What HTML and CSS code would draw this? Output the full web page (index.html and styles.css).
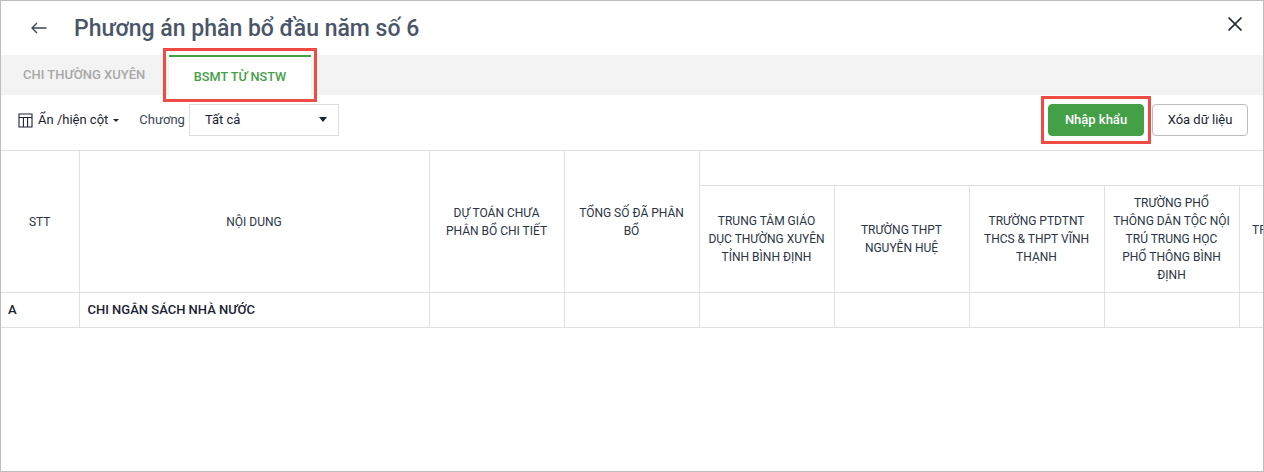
FILE: index.html
```html
<!DOCTYPE html>
<html lang="vi">
  <head>
    <meta charset="UTF-8" />
    <meta name="viewport" content="width=device-width, initial-scale=1.0" />
    <title>Phương án phân bổ đầu năm số 6</title>
    <link rel="stylesheet" href="styles.css">
  </head>
  <body>
    <div class="dialog">
      <!-- Header -->
      <div class="header">
        <svg class="back-icon" width="16" height="12" viewBox="0 0 16 12">
          <path d="M15.5 6H1M6 1 1 6l5 5" fill="none" stroke="#3d4654" stroke-width="1.4" />
        </svg>
        <h1>Phương án phân bổ đầu năm số 6</h1>
        <svg class="close-icon" width="16" height="16" viewBox="0 0 16 16">
          <path d="M1.5 1.5l13 13M14.5 1.5l-13 13" fill="none" stroke="#1a2233" stroke-width="1.7" />
        </svg>
      </div>

      <!-- Tabs -->
      <div class="tabs">
        <div class="tab">CHI THƯỜNG XUYÊN</div>
        <div class="tab active">BSMT TỪ NSTW</div>
      </div>

      <!-- Toolbar -->
      <div class="toolbar">
        <svg class="column-icon" width="15" height="15" viewBox="0 0 15 15">
          <path d="M1 1h13v13H1zM1 4.5h13M5.4 4.5V14M9.6 4.5V14" fill="none" stroke="#1a2233" stroke-width="1.1" />
        </svg>
        <span class="column-toggle">Ẩn /hiện cột</span>
        <span class="caret small"></span>
        <span class="field-label">Chương</span>
        <div class="select">
          <span>Tất cả</span>
          <span class="caret"></span>
        </div>
        <button class="btn btn-primary">Nhập khẩu</button>
        <button class="btn">Xóa dữ liệu</button>
      </div>

      <!-- Table -->
      <div class="table-wrap">
        <table>
          <colgroup>
            <col class="col-stt">
            <col class="col-content">
            <col class="col-num">
            <col class="col-num">
            <col class="col-num">
            <col class="col-num">
            <col class="col-num">
            <col class="col-num">
            <col class="col-num">
          </colgroup>
          <thead>
            <tr class="row-top">
              <th rowspan="2">STT</th>
              <th rowspan="2">NỘI DUNG</th>
              <th rowspan="2">DỰ TOÁN CHƯA PHÂN BỔ CHI TIẾT</th>
              <th rowspan="2">TỔNG SỐ ĐÃ PHÂN BỔ</th>
              <th colspan="5"></th>
            </tr>
            <tr class="row-sub">
              <th>TRUNG TÂM GIÁO DỤC THƯỜNG XUYÊN TỈNH BÌNH ĐỊNH</th>
              <th>TRƯỜNG THPT NGUYỄN HUỆ</th>
              <th>TRƯỜNG PTDTNT THCS &amp; THPT VĨNH THẠNH</th>
              <th>TRƯỜNG PHỔ THÔNG DÂN TỘC NỘI TRÚ TRUNG HỌC PHỔ THÔNG BÌNH ĐỊNH</th>
              <th>TRƯỜNG THPT SỐ 1 AN NHƠN</th>
            </tr>
          </thead>
          <tbody>
            <tr class="row-data">
              <td class="strong">A</td>
              <td class="strong indent">CHI NGÂN SÁCH NHÀ NƯỚC</td>
              <td></td>
              <td></td>
              <td></td>
              <td></td>
              <td></td>
              <td></td>
              <td></td>
            </tr>
          </tbody>
        </table>
      </div>

      <!-- Red callouts drawn over the screenshot -->
      <div class="callout callout-tab"></div>
      <div class="callout callout-import"></div>
    </div>
  </body>
</html>
```

FILE: styles.css
```css
/* Global Styles */
* {
  margin: 0;
  padding: 0;
  box-sizing: border-box;
}

body {
  font-family: Roboto, "Liberation Sans", Arial, sans-serif;
  background: #ffffff;
  color: #1a2233;
  overflow: hidden;
}

.dialog {
  position: relative;
  width: 1264px;
  height: 472px;
  border: 1px solid #bdbdbd;
  overflow: hidden;
}

/* Header */
.header {
  display: flex;
  align-items: center;
  height: 54px;
  padding: 0 20px 0 30px;
}

.back-icon {
  margin-right: 27px;
}

.header h1 {
  flex: 1;
  font-size: 23px;
  font-weight: 500;
  color: #4a5568;
}

.close-icon {
  margin-bottom: 8px;
}

/* Tabs */
.tabs {
  display: flex;
  height: 40px;
  background: #f3f3f3;
}

.tab {
  padding: 0 24px 0 22px;
  width: 168px;
  line-height: 39px;
  font-size: 13px;
  font-weight: 500;
  color: #a8a8a8;
  white-space: nowrap;
}

.tab.active {
  width: 142px;
  padding: 0;
  text-align: center;
  line-height: 40px;
  font-size: 12.7px;
  background: #ffffff;
  border-top: 2px solid #43a047;
  color: #43a047;
}

/* Toolbar */
.toolbar {
  display: flex;
  align-items: center;
  height: 55px;
  padding: 9px 15px 14px 17px;
  font-size: 13px;
}

.column-toggle {
  margin-left: 5px;
  padding-bottom: 2px;
}

.caret {
  width: 0;
  height: 0;
  border-left: 4.5px solid transparent;
  border-right: 4.5px solid transparent;
  border-top: 5px solid #1a2233;
}

.caret.small {
  margin-left: 5px;
  border-left-width: 3px;
  border-right-width: 3px;
  border-top-width: 3px;
}

.field-label {
  margin-left: 20px;
  padding-bottom: 2px;
  color: #3d4654;
}

.select {
  display: flex;
  align-items: center;
  justify-content: space-between;
  width: 150px;
  height: 32px;
  margin-left: 4px;
  padding: 0 11px 1px 15px;
  border: 1px solid #dddddd;
}

.btn {
  width: 96px;
  height: 32px;
  padding-bottom: 2px;
  border: 1px solid #bdbdbd;
  border-radius: 4px;
  background: #ffffff;
  color: #1a2233;
  font-family: inherit;
  font-size: 13px;
}

.btn-primary {
  margin-left: auto;
  margin-right: 8px;
  border-color: #43a047;
  background: #43a047;
  color: #ffffff;
  font-weight: 500;
}

/* Table */
.table-wrap {
  overflow: hidden;
}

table {
  table-layout: fixed;
  width: 1349px;
  border-collapse: collapse;
  font-size: 12px;
}

.col-stt {
  width: 78px;
}

.col-content {
  width: 350px;
}

.col-num {
  width: 135px;
}

th,
td {
  border: 1px solid #e0e0e0;
}

th:first-child,
td:first-child {
  border-left: none;
}

thead {
  border-top: 1px solid #e0e0e0;
}

th {
  padding: 0 8px;
  font-weight: 400;
  line-height: 18px;
  color: #2b3445;
  text-align: center;
}

.row-top {
  height: 35px;
}

.row-sub {
  height: 107px;
}

.row-data {
  height: 35px;
}

td.strong {
  padding-left: 7px;
  padding-bottom: 2px;
  font-size: 13px;
  font-weight: 500;
  color: #1a2233;
}

td.indent {
  padding-left: 8px;
}

/* Callouts */
.callout {
  position: absolute;
  border: 3px solid #ef4b45;
}

.callout-tab {
  left: 162px;
  top: 47px;
  width: 154px;
  height: 54px;
}

.callout-import {
  left: 1040px;
  top: 95px;
  width: 110px;
  height: 48px;
}
```
